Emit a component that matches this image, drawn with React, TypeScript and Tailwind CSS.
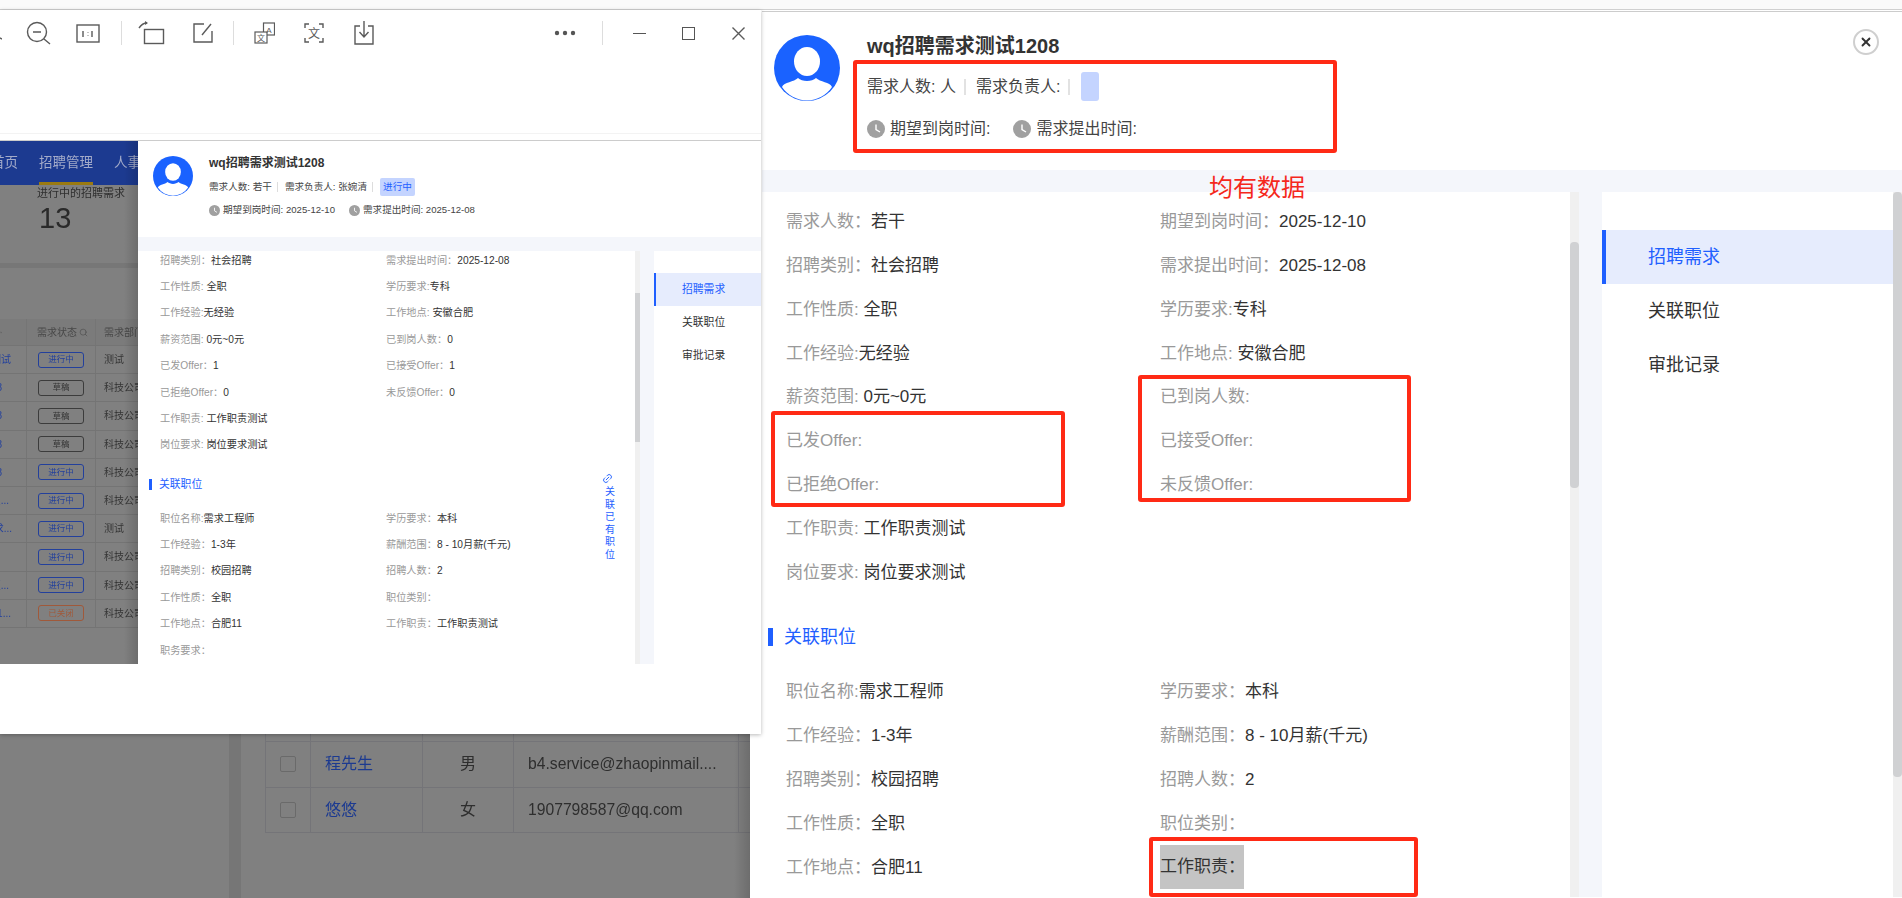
import { Link2, Search, X } from 'lucide-react'

type FieldRow = [string, string]

const drawerTop: FieldRow[] = [
  ['需求人数：', '若干'], ['期望到岗时间：', '2025-12-10'],
  ['招聘类别：', '社会招聘'], ['需求提出时间：', '2025-12-08'],
  ['工作性质: ', '全职'], ['学历要求:', '专科'],
  ['工作经验:', '无经验'], ['工作地点: ', '安徽合肥'],
  ['薪资范围: ', '0元~0元'], ['已到岗人数:', ''],
  ['已发Offer:', ''], ['已接受Offer:', ''],
  ['已拒绝Offer:', ''], ['未反馈Offer:', ''],
  ['工作职责: ', '工作职责测试'], ['', ''],
  ['岗位要求: ', '岗位要求测试'], ['', ''],
]

const drawerJob: FieldRow[] = [
  ['职位名称:', '需求工程师'], ['学历要求：', '本科'],
  ['工作经验：', '1-3年'], ['薪酬范围：', '8 - 10月薪(千元)'],
  ['招聘类别：', '校园招聘'], ['招聘人数：', '2'],
  ['工作性质：', '全职'], ['职位类别：', ''],
  ['工作地点：', '合肥11'],
]

const previewTop: FieldRow[] = [
  ['招聘类别：', '社会招聘'], ['需求提出时间：', '2025-12-08'],
  ['工作性质: ', '全职'], ['学历要求:', '专科'],
  ['工作经验:', '无经验'], ['工作地点: ', '安徽合肥'],
  ['薪资范围: ', '0元~0元'], ['已到岗人数：', '0'],
  ['已发Offer：', '1'], ['已接受Offer：', '1'],
  ['已拒绝Offer：', '0'], ['未反馈Offer：', '0'],
  ['工作职责: ', '工作职责测试'], ['', ''],
  ['岗位要求: ', '岗位要求测试'], ['', ''],
]

const previewJob: FieldRow[] = [
  ['职位名称:', '需求工程师'], ['学历要求：', '本科'],
  ['工作经验：', '1-3年'], ['薪酬范围：', '8 - 10月薪(千元)'],
  ['招聘类别：', '校园招聘'], ['招聘人数：', '2'],
  ['工作性质：', '全职'], ['职位类别：', ''],
  ['工作地点：', '合肥11'], ['工作职责：', '工作职责测试'],
  ['职务要求：', ''], ['', ''],
]

const tableRows = [
  { left: '测试', leftClass: 'pr-[15px]', status: '进行中', dept: '测试' },
  { left: '1208', leftClass: 'pr-[24px]', status: '草稿', dept: '科技公司' },
  { left: '1208', leftClass: 'pr-[24px]', status: '草稿', dept: '科技公司' },
  { left: '1208', leftClass: 'pr-[24px]', status: '草稿', dept: '科技公司' },
  { left: '1208', leftClass: 'pr-[24px]', status: '进行中', dept: '科技公司' },
  { left: '点...', leftClass: 'pr-[17px]', status: '进行中', dept: '科技公司' },
  { left: '求...', leftClass: 'pr-[14px]', status: '进行中', dept: '测试' },
  { left: '', leftClass: '', status: '进行中', dept: '科技公司' },
  { left: '更...', leftClass: 'pr-[17px]', status: '进行中', dept: '科技公司' },
  { left: '1...', leftClass: 'pr-[15px]', status: '已关闭', dept: '科技公司' },
]

const statusStyles: Record<string, string> = {
  进行中: 'border-[#23409c] text-[#23409c]',
  草稿: 'border-[#3c3c3c] text-[#333333]',
  已关闭: 'border-[#a0593a] text-[#a0593a]',
}

function Field({ row }: { row: FieldRow }) {
  return (
    <div className="whitespace-pre overflow-hidden text-[#999999]">
      {row[0]}
      <span className="text-[#333333]">{row[1]}</span>
    </div>
  )
}

function Avatar({ className }: { className: string }) {
  return (
    <svg viewBox="0 0 66 66" className={className}>
      <circle cx="33" cy="33" r="33" fill="#1a62ff" />
      <ellipse cx="33" cy="26.5" rx="13" ry="14.5" fill="#fff" />
      <path d="M8 52C10 47 20 47 24 43C28 47 38 47 42 43C46 47 56 47 58 52A30 30 0 0 1 8 52Z" fill="#fff" />
    </svg>
  )
}

function Clock({ className }: { className: string }) {
  return (
    <svg viewBox="0 0 18 18" className={className}>
      <circle cx="9" cy="9" r="9" fill="#a0a0a0" />
      <path d="M9 4.5V9.5L13 12" fill="none" stroke="#fff" strokeWidth="1.4" />
    </svg>
  )
}

function Toolbar() {
  const line = { fill: 'none', stroke: '#5a5a5a', strokeWidth: 1.4 }
  return (
    <div className="h-[46px] flex items-center shrink-0">
      <svg width="2" height="24"><path d="M0 17l2 1" {...line} /></svg>
      <svg width="26" height="24" className="ml-[23px]">
        <circle cx="12" cy="11" r="9.5" {...line} />
        <path d="M8 11h8M19 18l6 5" {...line} />
      </svg>
      <svg width="24" height="19" className="ml-[25px]">
        <rect x="1" y="1" width="22" height="17" {...line} />
        <path d="M7 7v6M12 8v.5M12 11v.5M16 7v6" {...line} />
      </svg>
      <div className="ml-[21px] w-px h-6 bg-[#dddddd]" />
      <svg width="27" height="24" className="ml-[16px]">
        <rect x="6.5" y="8.5" width="19" height="14" {...line} />
        <path d="M1 7C3 4 5 2 9 2" {...line} />
        <path d="M7 0l3 2-3 2" fill="#5a5a5a" />
      </svg>
      <svg width="20" height="20" className="ml-[28px]">
        <path d="M11 1H1V19H19V8" {...line} />
        <path d="M9 12L18 1" {...line} />
      </svg>
      <div className="ml-[20px] w-px h-6 bg-[#dddddd]" />
      <svg width="21" height="22" className="ml-[20px]">
        <rect x="9.5" y="1" width="11" height="12" fill="#fff" stroke="#5a5a5a" strokeWidth="1.2" />
        <rect x="1" y="10" width="12" height="11" fill="#fff" stroke="#5a5a5a" strokeWidth="1.2" />
        <text x="15" y="10.5" fontSize="8" textAnchor="middle" fill="#5a5a5a">A</text>
        <text x="7" y="19" fontSize="8" textAnchor="middle" fill="#5a5a5a">文</text>
      </svg>
      <svg width="20" height="20" className="ml-[29px]">
        <path d="M1 5V1H5M15 1H19V5M19 15V19H15M5 19H1V15" {...line} />
        <text x="10" y="15" fontSize="12" textAnchor="middle" fill="#5a5a5a">文</text>
      </svg>
      <svg width="20" height="24" className="ml-[30px]">
        <path d="M6 5H1V23H19V5H14" {...line} />
        <path d="M10 0V15M5.5 11L10 16L14.5 11" {...line} />
      </svg>
      <svg width="22" height="6" className="ml-[180px]">
        <circle cx="3" cy="3" r="2.2" fill="#555555" />
        <circle cx="11" cy="3" r="2.2" fill="#555555" />
        <circle cx="19" cy="3" r="2.2" fill="#555555" />
      </svg>
      <div className="ml-[26px] w-px h-6 bg-[#dddddd]" />
      <div className="ml-[30px] w-[13px] h-px bg-[#555555]" />
      <div className="ml-[36px] w-[13px] h-[13px] border border-[#555555]" />
      <svg width="13" height="13" className="ml-[37px]">
        <path d="M0.5 0.5L12.5 12.5M12.5 0.5L0.5 12.5" {...line} />
      </svg>
    </div>
  )
}

function BackdropList() {
  return (
    <div className="relative w-[138px] shrink-0 overflow-hidden bg-[#808080] blur-[0.3px]">
      <div className="relative h-[44px] bg-[#1c3a90] flex items-center -ml-[9px] gap-[21px] text-[13.5px] text-[#a3abc9] whitespace-nowrap">
        <span>首页</span>
        <span className="relative">
          招聘管理
          <span className="absolute left-0 right-0 -bottom-[12px] h-[3px] bg-[#9a7a12]" />
        </span>
        <span>人事</span>
      </div>
      <div className="pl-[37px] mt-px text-[11px] leading-[14px] text-[#2e2e2e] whitespace-nowrap">进行中的招聘需求</div>
      <div className="pl-[39px] text-[29px] leading-[34px] mt-[1px] text-[#2a2a2a]">13</div>
      <div className="mt-[28px] h-[5px] bg-[#777777]" />
      <div className="mt-[51px] h-[27px] bg-[#7b7b7b] grid grid-cols-[27px_69px_42px] items-center text-[10px] text-[#484848] whitespace-nowrap border-b border-[#747474]">
        <div className="flex justify-end pr-[24px] h-full items-center border-r border-[#757575]">
          <Search size={9} strokeWidth={1.5} />
        </div>
        <div className="flex items-center pl-[10px] gap-[2px] h-full border-r border-[#757575]">
          需求状态 <Search size={9} strokeWidth={1.5} />
        </div>
        <div className="pl-[8px] overflow-hidden">需求部门</div>
      </div>
      {tableRows.map((row, i) => (
        <div
          key={i}
          className="h-[28.2px] grid grid-cols-[27px_69px_42px] items-center text-[10px] whitespace-nowrap border-b border-[#747474]"
        >
          <div className={`flex justify-end h-full items-center overflow-hidden text-[#23409c] border-r border-[#757575] ${row.leftClass}`}>
            {row.left}
          </div>
          <div className="h-full flex items-center pl-[11px] border-r border-[#757575]">
            <div className={`w-[46px] h-[16px] border rounded-[3px] flex items-center justify-center text-[8.5px] ${statusStyles[row.status]}`}>
              {row.status}
            </div>
          </div>
          <div className="pl-[8px] overflow-hidden text-[#353535]">{row.dept}</div>
        </div>
      ))}
      <div className="absolute inset-y-0 right-0 w-[14px] bg-linear-to-r from-transparent to-black/15" />
    </div>
  )
}

function PreviewDrawer() {
  return (
    <div className="flex-1 min-w-0 flex flex-col bg-white">
      <div className="h-[96px] shrink-0 flex pl-[15px] pt-[15px]">
        <Avatar className="w-[40px] h-[40px]" />
        <div className="ml-[16px] -mt-[1px]">
          <div className="text-[12px] leading-[16px] font-bold text-[#333333]">wq招聘需求测试1208</div>
          <div className="mt-[7px] h-[18px] flex items-center text-[9.6px] text-[#444444] whitespace-pre">
            <span>需求人数: 若干</span>
            <div className="ml-[5px] w-px h-[10px] bg-[#dddddd]" />
            <span className="ml-[7px]">需求负责人: 张婉清</span>
            <div className="ml-[5px] w-px h-[10px] bg-[#dddddd]" />
            <div className="ml-[7px] w-[35px] h-[18px] rounded-[2px] bg-[#c4d4ff] text-[#1f5fff] flex items-center justify-center">进行中</div>
          </div>
          <div className="mt-[7px] flex items-center text-[9.6px] text-[#444444] whitespace-pre">
            <Clock className="w-[11px] h-[11px]" />
            <span className="ml-[3px]">期望到岗时间: 2025-12-10</span>
            <Clock className="ml-[14px] w-[11px] h-[11px]" />
            <span className="ml-[3px]">需求提出时间: 2025-12-08</span>
          </div>
        </div>
      </div>
      <div className="h-[14px] shrink-0 bg-[#f4f6fb]" />
      <div className="h-[413px] shrink-0 flex">
        <div className="relative w-[497px] shrink-0 overflow-hidden">
          <div className="pl-[22px] -mt-[4px] grid grid-cols-[226px_1fr] auto-rows-[26.4px] items-center text-[10.2px]">
            {previewTop.map((row, i) => <Field key={i} row={row} />)}
          </div>
          <div className="mt-[21px] pl-[11px] flex items-center">
            <div className="w-[3px] h-[11px] bg-[#1f5fff]" />
            <span className="ml-[7px] text-[10.8px] leading-[11px] text-[#1f5fff]">关联职位</span>
          </div>
          <div className="mt-[15px] pl-[22px] grid grid-cols-[226px_1fr] auto-rows-[26.4px] items-center text-[10.2px]">
            {previewJob.map((row, i) => <Field key={i} row={row} />)}
          </div>
          <div className="absolute left-[465px] top-[222px] flex flex-col items-center w-[14px] text-[10px] leading-[12.5px] text-[#1f5fff]">
            <Link2 size={11} className="-rotate-45 -ml-[6px] mb-[2px]" />
            {'关联已有职位'.split('').map((c, i) => <span key={i}>{c}</span>)}
          </div>
        </div>
        <div className="w-[5px] shrink-0 bg-[#f0f0f0]">
          <div className="mt-[42px] h-[149px] bg-[#d0d1d3]" />
        </div>
        <div className="w-[14px] shrink-0 bg-[#f4f6fb]" />
        <div className="flex-1 pt-[22px] text-[10.8px] text-[#333333]">
          <div className="h-[33px] bg-[#e6ecfd] border-l-2 border-[#1f5fff] pl-[26px] flex items-center text-[#1f5fff]">招聘需求</div>
          <div className="h-[33px] pl-[28px] flex items-center">关联职位</div>
          <div className="h-[33px] pl-[28px] flex items-center">审批记录</div>
        </div>
      </div>
    </div>
  )
}

export default function App() {
  return (
    <div className="relative w-[1902px] h-[898px] overflow-hidden bg-white font-['Liberation_Sans','Noto_Sans_CJK_SC',sans-serif]">
      <div className="h-[9px] bg-[#fafafa]" />
      <div className="h-px bg-[#d0d0d0]" />

      {/* page behind the pasted viewer */}
      <div className="absolute left-0 top-[734px] w-[750px] h-[164px] bg-[#808080] flex">
        <div className="ml-[229px] w-[12px] bg-[#767676]" />
        <div className="ml-[24px] w-[485px] blur-[0.2px]">
          <div className="h-[8px] grid grid-cols-[45px_112px_91px_225px_12px] border-b border-l border-[#747478]">
            <div className="border-r border-[#747478]" />
            <div className="border-r border-[#747478]" />
            <div className="border-r border-[#747478]" />
            <div className="border-r border-[#747478]" />
          </div>
          {[
            { name: '程先生', sex: '男', mail: 'b4.service@zhaopinmail....' },
            { name: '悠悠', sex: '女', mail: '1907798587@qq.com' },
          ].map((r) => (
            <div key={r.name} className="h-[45.5px] grid grid-cols-[45px_112px_91px_225px_12px] items-center text-[16px] border-b border-l border-[#747478] text-[#2e2e2e]">
              <div className="h-full flex items-center pl-[14px] border-r border-[#747478]">
                <div className="w-[16px] h-[16px] rounded-[2px] border border-[#6a6a6a]" />
              </div>
              <div className="h-full flex items-center pl-[14px] border-r border-[#747478] text-[#1c3a90]">{r.name}</div>
              <div className="h-full flex items-center justify-center border-r border-[#747478]">{r.sex}</div>
              <div className="h-full flex items-center pl-[14px] border-r border-[#747478] whitespace-nowrap overflow-hidden text-[15.7px]">{r.mail}</div>
            </div>
          ))}
        </div>
        <div className="absolute inset-y-0 right-0 w-[16px] bg-linear-to-r from-transparent to-black/15" />
      </div>

      {/* pasted image viewer window */}
      <div className="absolute z-10 left-0 top-[10px] w-[761px] h-[724px] bg-white shadow-[0_1px_4px_rgba(0,0,0,0.28)] flex flex-col">
        <Toolbar />
        <div className="h-[78px] shrink-0 border-b border-[#f3f3f3]" />
        <div className="h-[7px] shrink-0 border-b border-[#cccccc]" />
        <div className="h-[523px] shrink-0 flex">
          <BackdropList />
          <PreviewDrawer />
        </div>
      </div>

      {/* detail drawer */}
      <div className="absolute left-[762px] top-[11px] right-0 bottom-px border-t border-[#cccccc] bg-white flex flex-col text-[17px]">
        <div className="relative h-[158px] shrink-0 flex pl-[12px] pt-[23px]">
          <Avatar className="w-[66px] h-[66px]" />
          <div className="ml-[27px] -mt-[3px]">
            <div className="text-[20px] leading-[28px] font-bold text-[#333333]">wq招聘需求测试1208</div>
            <div className="mt-[12px] h-[29px] flex items-center text-[16px] text-[#444444] whitespace-pre">
              <span>需求人数: 人</span>
              <div className="ml-[8px] w-[2px] h-[16px] bg-[#e2e2e2]" />
              <span className="ml-[10px]">需求负责人:</span>
              <div className="ml-[8px] w-[2px] h-[16px] bg-[#e2e2e2]" />
              <div className="ml-[11px] w-[18px] h-[29px] rounded-[3px] bg-[#c4d4ff]" />
            </div>
            <div className="mt-[16px] flex items-center text-[16px] text-[#444444]">
              <Clock className="w-[18px] h-[18px]" />
              <span className="ml-[5px]">期望到岗时间:</span>
              <Clock className="ml-[23px] w-[18px] h-[18px]" />
              <span className="ml-[5px]">需求提出时间:</span>
            </div>
          </div>
          <div className="absolute right-[23px] top-[17px] w-[26px] h-[26px] rounded-full border-2 border-[#cfcfcf] flex items-center justify-center text-[#333333]">
            <X size={14} strokeWidth={3.2} />
          </div>
        </div>
        <div className="h-[22px] shrink-0 bg-[#f4f6fb]" />
        <div className="flex-1 min-h-0 flex">
          <div className="w-[808px] shrink-0 overflow-hidden pt-[8px]">
            <div className="pl-[24px] grid grid-cols-[374px_1fr] auto-rows-[43.8px] items-center">
              {drawerTop.map((row, i) => <Field key={i} row={row} />)}
            </div>
            <div className="mt-[34px] pl-[6px] flex items-center">
              <div className="w-[5px] h-[18px] bg-[#1f5fff]" />
              <span className="ml-[11px] text-[18px] leading-[18px] text-[#1f5fff]">关联职位</span>
            </div>
            <div className="mt-[24px] pl-[24px] grid grid-cols-[374px_1fr] auto-rows-[43.8px] items-center">
              {drawerJob.map((row, i) => <Field key={i} row={row} />)}
              <div className="w-[84px] h-[44px] bg-[#c4c4c4] text-[#333333] leading-[44px] whitespace-nowrap">工作职责：</div>
            </div>
          </div>
          <div className="w-[9px] shrink-0 bg-[#f0f0f0]">
            <div className="mt-[50px] h-[246px] rounded-[4px] bg-[#d0d1d3]" />
          </div>
          <div className="w-[23px] shrink-0 bg-[#f4f6fb]" />
          <div className="w-[291px] shrink-0 pt-[38px] text-[18px] text-[#333333]">
            <div className="h-[54px] bg-[#e6ecfd] border-l-4 border-[#1f5fff] pl-[42px] pt-px flex items-center text-[#1f5fff]">招聘需求</div>
            <div className="h-[54px] pl-[46px] pt-px flex items-center">关联职位</div>
            <div className="h-[54px] pl-[46px] pt-px flex items-center">审批记录</div>
          </div>
          <div className="w-[9px] shrink-0 bg-[#f0f0f0]">
            <div className="h-[585px] rounded-[4px] bg-[#d0d1d3]" />
          </div>
        </div>
      </div>

      {/* red review annotations */}
      <div className="absolute z-20 left-[853px] top-[60px] w-[484px] h-[93px] border-4 border-[#ff2a15] rounded-[3px]" />
      <div className="absolute z-20 left-[1209px] top-[173px] text-[24px] leading-[30px] text-[#f5281c]">均有数据</div>
      <div className="absolute z-20 left-[771px] top-[411px] w-[294px] h-[96px] border-4 border-[#ff2a15] rounded-[3px]" />
      <div className="absolute z-20 left-[1138px] top-[375px] w-[273px] h-[127px] border-4 border-[#ff2a15] rounded-[3px]" />
      <div className="absolute z-20 left-[1149px] top-[837px] w-[269px] h-[60px] border-4 border-[#ff2a15] rounded-[3px]" />
    </div>
  )
}
